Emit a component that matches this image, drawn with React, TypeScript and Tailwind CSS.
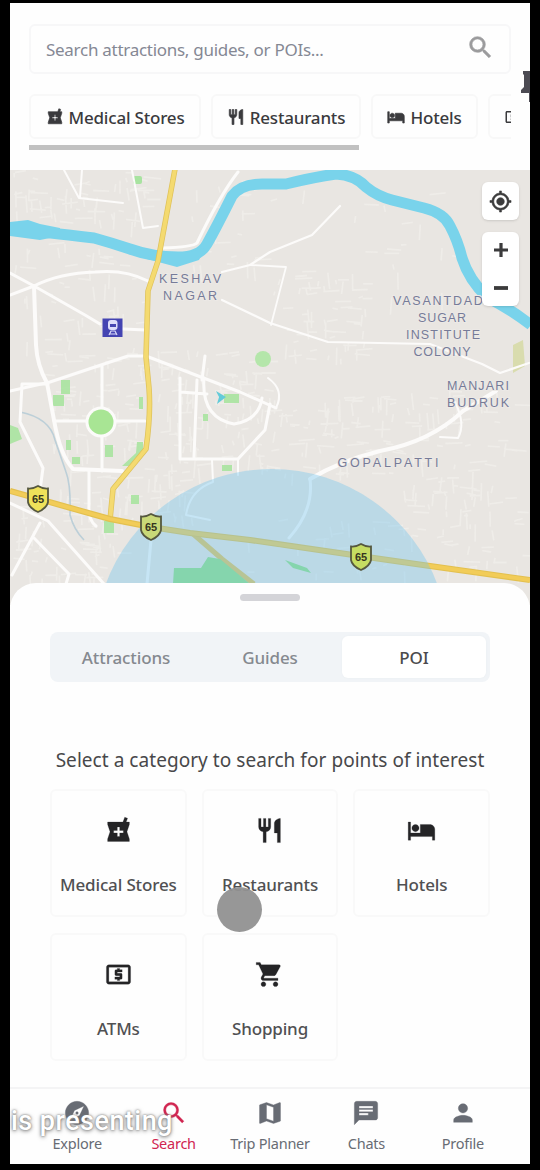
import React from 'react';
import {
  MdChat, MdExplore, MdHotel, MdLocalAtm, MdLocalPharmacy, MdMap, MdMyLocation,
  MdPerson, MdRestaurant, MdSearch, MdShoppingCart,
} from 'react-icons/md';

const chips = [
  { label: 'Medical Stores', icon: MdLocalPharmacy, box: 'w-[172px]' },
  { label: 'Restaurants', icon: MdRestaurant, box: 'w-[150px]' },
  { label: 'Hotels', icon: MdHotel, box: 'w-[107px]' },
];

const categories = [
  { label: 'Medical Stores', icon: MdLocalPharmacy },
  { label: 'Restaurants', icon: MdRestaurant },
  { label: 'Hotels', icon: MdHotel },
  { label: 'ATMs', icon: MdLocalAtm },
  { label: 'Shopping', icon: MdShoppingCart },
];

const navItems = [
  { label: 'Explore', icon: MdExplore, color: 'text-[#686c74]' },
  { label: 'Search', icon: MdSearch, color: 'text-[#d02550]' },
  { label: 'Trip Planner', icon: MdMap, color: 'text-[#686c74]' },
  { label: 'Chats', icon: MdChat, color: 'text-[#686c74]' },
  { label: 'Profile', icon: MdPerson, color: 'text-[#686c74]' },
];

// Areas of dense minor streets: x, y, width, height, number of streets
const districts = [
  [14, 172, 140, 50, 60], [14, 240, 130, 60, 30], [20, 300, 125, 75, 40],
  [50, 380, 95, 90, 60], [155, 350, 120, 120, 110], [275, 270, 90, 90, 60],
  [260, 395, 130, 80, 70], [385, 390, 130, 110, 70], [400, 490, 125, 80, 50],
  [12, 500, 100, 80, 45], [120, 470, 80, 50, 40], [190, 180, 90, 90, 25],
  [300, 190, 170, 110, 22], [220, 520, 200, 55, 30], [60, 470, 60, 90, 30],
];

function minorStreets() {
  let seed = 11;
  const rnd = () => {
    seed = (seed * 16807) % 2147483647;
    return seed / 2147483647;
  };
  let d = '';
  for (const [x, y, w, h, n] of districts) {
    for (let i = 0; i < n; i++) {
      const px = x + rnd() * w;
      const py = y + rnd() * h;
      const len = 4 + rnd() * 14;
      const tilt = (rnd() - 0.5) * 4;
      d += rnd() > 0.5
        ? `M${px.toFixed(1)} ${py.toFixed(1)}l${len.toFixed(1)} ${tilt.toFixed(1)}`
        : `M${px.toFixed(1)} ${py.toFixed(1)}l${tilt.toFixed(1)} ${len.toFixed(1)}`;
    }
  }
  return d;
}

const streets = minorStreets();

function Shield({ x, y, fill }: { x: number; y: number; fill: string }) {
  return (
    <g transform={`translate(${x} ${y})`}>
      <path d="M-10 -10.5Q-5 -10 0 -13Q5 -10 10 -10.5V3Q9 9 0 13Q-9 9 -10 3Z" fill={fill} stroke="#56583f" strokeWidth="1.8" />
      <text y="4" textAnchor="middle" fontSize="11" fontWeight="700" fill="#35351f">65</text>
    </g>
  );
}

function CityMap() {
  return (
    <svg viewBox="10 170 520 435" className="block h-full w-full font-['Liberation_Sans',sans-serif]">
      <rect x="10" y="169" width="520" height="437" fill="#e9e6e2" />
      <path d={streets} stroke="#f6f4f0" strokeWidth="1.8" fill="none" opacity=".5" />

      <g fill="#a8e3a0">
        <rect x="133" y="176" width="9" height="8" rx="2" />
        <circle cx="263" cy="359" r="8" fill="#b4e6aa" />
        <path d="M61 380h9v14h-9zM53 395h11v11h-11zM10 425l8 3 4 11-12 5zM66 440h5v10h-5zM105 445h8v12h-8zM72 457h8v7h-8zM137 442h6v10l-13 14h-8l14-13zM139 397h4v12h-4zM104 521h10v12h-10zM131 495h8v9h-8zM224 394h15v9h-15zM203 414h5v7h-5zM222 465h10v6h-10z" opacity=".9" />
      </g>
      <path d="M513 345l10-5 2 26-12 7z" fill="#d9dcae" />
      <path d="M216 391l10 6-9 7 2-7z" fill="#63cbd9" />
      <path d="M20 412Q50 418 55 440L66 472Q71 485 70 515Q74 530 84 540" stroke="#bccfd8" strokeWidth="1.6" fill="none" />

      <g fill="none" stroke="#fcfbfa" strokeWidth="3" strokeLinejoin="round" strokeLinecap="round">
        <path d="M10 273L34 286L85 315L100 324M123 329L146 330" />
        <path d="M10 295L34 286Q60 273 95 272Q125 269 148 281" />
        <path d="M34 286L36 345Q37 365 47 383L54 420Q60 455 73 469L122 471" strokeWidth="4" />
        <path d="M10 391L50 382L128 356L146 356L240 392L276 408" />
        <path d="M48 384L22 384L20 422L43 468L40 490" />
        <path d="M102 366V471M54 421H145M89 471V505Q88 520 96 526" />
        <path d="M64 170L79 198L123 203M82 170L80 197M132 170L143 228L158 226" strokeWidth="2" />
        <path d="M238 172Q220 195 197 243Q193 247 162 248" />
        <path d="M222 272L250 265L270 252L312 235L340 206M222 300L270 323L328 342L430 344L482 364L500 373L529 363" strokeWidth="2.2" />
        <path d="M250 265L286 267L271 325" strokeWidth="1.8" />
        <path d="M180 378V459H238L265 430L270 404M197 380L194 457M204 378Q201 418 234 424Q259 420 262 398M180 392L207 394M205 356L202 380" />
        <path d="M238 460L238 475M212 460L213 482Q190 490 186 515M186 515L210 520" strokeWidth="2" />
        <path d="M310 479Q340 461 380 451Q430 442 463 411L496 391" strokeWidth="4" />
        <path d="M329 469L310 479Q314 510 289 538" />
        <path d="M10 503L48 521L104 584M40 523L12 575M34 538L69 574L66 584M151 540L147 584" />
        <path d="M455 402Q466 424 458 438L440 437M268 378Q285 390 276 408" strokeWidth="2" />
      </g>
      <circle cx="101" cy="422" r="15.5" fill="#fcfbfa" />
      <circle cx="101" cy="422" r="12.5" fill="#a8e594" />

      <path d="M10 228Q40 232 94 238Q112 243 130 249Q152 257 178 257Q200 257 207 244Q216 228 232 196Q241 184 262 184L286 184Q314 177 336 174Q355 175 366 187Q377 196 392 200L424 208Q444 213 450 226Q458 241 462 258Q469 280 487 297Q510 309 531 325" fill="none" stroke="#79d3eb" strokeWidth="11" strokeLinejoin="round" />
      <path d="M10 222l18-2 12 4 20 4v8l-20 4-30-4zM150 251l35 2 20-5-6 12-22 7-30-8z" fill="#79d3eb" />

      <g fill="none" strokeLinejoin="round">
        <path d="M175 169L158 261L148 291L146 357L149 388Q151 414 146 449L113 489L110 520" stroke="#dfc25a" strokeWidth="5.5" />
        <path d="M175 169L158 261L148 291L146 357L149 388Q151 414 146 449L113 489L110 520" stroke="#f4da70" strokeWidth="4" />
        <path d="M192 533L222 559L254 584" stroke="#e5c35b" strokeWidth="5" />
        <path d="M10 491L110 519L151 527L190 533L250 540L360 556L430 566L530 580" stroke="#e3c04f" strokeWidth="6" />
        <path d="M10 491L110 519L151 527L190 533L250 540L360 556L430 566L530 580" stroke="#f2cc58" strokeWidth="3.8" />
      </g>
      <path d="M174 568H201L208 557L220 559L250 584H173ZM285 560l22 8 4 5-18-5z" fill="#8fdf82" />
      <Shield x={38} y={499} fill="#efe15a" />
      <path d="M105 586A177 177 0 0 1 438 586Z" fill="#76c5ed" opacity=".4" />
      <Shield x={151} y={527} fill="#c9d978" />
      <Shield x={361} y={557} fill="#c5dc62" />

      <rect x="102.500" y="318.500" width="20" height="18.500" fill="#4444b2" />
      <rect x="108" y="320" width="9.500" height="10" rx="3" fill="#dcdcfa" />
      <path d="M110 324h6v3h-6z" fill="#4444b2" />
      <path d="M109 335l2-4h4l2 4M110 334h7" stroke="#dcdcfa" strokeWidth="1.2" fill="none" />

      <g fill="#767b98" fontSize="12.500" textAnchor="middle" stroke="#ece9e6" strokeWidth="2" paintOrder="stroke">
        <text x="190" y="283" textLength="62">KESHAV</text>
        <text x="190" y="300" textLength="54">NAGAR</text>
        <text x="443" y="305" textLength="100">VASANTDADA</text>
        <text x="442" y="322" textLength="48">SUGAR</text>
        <text x="443" y="339" textLength="74">INSTITUTE</text>
        <text x="442" y="356" textLength="57">COLONY</text>
        <text x="478" y="390" textLength="62">MANJARI</text>
        <text x="478" y="407" textLength="62">BUDRUK</text>
        <text x="388" y="467" textLength="101">GOPALPATTI</text>
      </g>
    </svg>
  );
}

export default function App() {
  return (
    <div className="h-[1170px] w-[540px] overflow-hidden bg-black px-[10px] pt-[3px] font-['Noto_Sans','Open_Sans',sans-serif]">
      <main className="relative flex h-[1161px] flex-col overflow-hidden bg-[#fefefe] [&_path[d^='M0_0h24']]:hidden">
        <header className="flex h-[167px] shrink-0 flex-col px-[19px] pt-[21px]">
          <div className="flex h-[50px] shrink-0 items-center justify-between rounded-md border-2 border-[#f7f7f8] pl-[15px] pr-[14px]">
            <span className="mt-[2px] whitespace-nowrap text-[17px] tracking-[-0.28px] text-[#858894]">Search attractions, guides, or POIs...</span>
            <MdSearch className="-mt-1 size-[29px] text-[#9b9b9d] [stroke-width:0.5]" />
          </div>
          <div className="mt-5 flex gap-[10px] overflow-hidden">
            {chips.map(({ label, icon: Icon, box }) => (
              <div key={label} className={`${box} flex h-[45px] shrink-0 items-center justify-center gap-[5px] rounded-md border-2 border-[#f8f8f8] text-[#3a3a3d]`}>
                <Icon className="size-[18px] shrink-0 [stroke-width:0.9]" />
                <span className="mt-[2px] whitespace-nowrap text-[17px] font-medium tracking-[-0.2px]">{label}</span>
              </div>
            ))}
            <div className="flex h-[45px] w-28 shrink-0 items-center rounded-md border-2 border-[#f8f8f8] pl-[14px] text-[#3a3a3d]">
              <MdLocalAtm className="size-[18px]" />
            </div>
          </div>
          <div className="mt-[6px] h-[5px] w-[330px] shrink-0 bg-[#c1c1c1]" />
        </header>

        <svg viewBox="0 0 9 32" className="absolute right-0 top-[68px] h-8 w-[9px]">
          <path d="M2 0h7v31H8V22H0v-3l3-3V4L2 3z" fill="#4c4b53" />
        </svg>

        <section className="relative h-[435px] shrink-0">
          <CityMap />
          <div className="absolute right-[11px] top-[12px] flex flex-col gap-3 text-[#3b3b3c]">
            <div className="flex h-[38px] w-[37px] items-center justify-center rounded-md bg-white shadow">
              <MdMyLocation className="size-[23px] [stroke-width:0.6]" />
            </div>
            <div className="flex h-[74px] w-[37px] flex-col items-center justify-between rounded-md bg-white py-[10px] shadow">
              <svg viewBox="0 0 16 16" className="size-4"><path d="M8 1v14M1 8h14" stroke="currentColor" strokeWidth="3.200" /></svg>
              <svg viewBox="0 0 16 16" className="size-4"><path d="M1 8h14" stroke="currentColor" strokeWidth="3.800" /></svg>
            </div>
          </div>
        </section>

        <section className="relative -mt-[22px] flex min-h-0 flex-1 flex-col rounded-t-[26px] bg-[#fefefe] px-10">
          <div className="mx-auto mt-[11px] h-[7px] w-[60px] shrink-0 rounded bg-[#d4d4d8]" />
          <div className="mt-[31px] flex h-[50px] shrink-0 rounded-lg bg-[#f1f4f7] p-1 text-[17px] font-medium tracking-[-0.1px] text-[#85898f]">
            <div className="flex flex-1 items-center justify-center pt-[2px]">Attractions</div>
            <div className="flex flex-1 items-center justify-center pt-[2px]">Guides</div>
            <div className="flex flex-1 items-center justify-center rounded-md bg-white pt-[2px] text-[#4b4b4d] shadow-[0_0_2px_#e9edf0]">POI</div>
          </div>
          <p className="-mx-3 mt-[65px] whitespace-nowrap text-center text-[19px] leading-[27px] tracking-[0.05px] text-[#48484a]">Select a category to search for points of interest</p>
          <div className="mt-[15px] grid grid-cols-3 gap-x-[15px] gap-y-4">
            {categories.map(({ label, icon: Icon }) => (
              <div key={label} className="flex h-32 flex-col items-center rounded-md border-2 border-[#f9f9f9] pt-[25px] text-[#242426]">
                <Icon className="size-[29px] [stroke-width:0.2]" />
                <span className="mt-[28px] whitespace-nowrap text-[17px] font-medium leading-6 tracking-[-0.15px] text-[#505052]">{label}</span>
              </div>
            ))}
          </div>
          <div className="absolute left-[207px] top-[304px] size-[45px] rounded-full bg-[#919191]/95" />
        </section>

        <nav className="relative flex h-[77px] shrink-0 border-t-2 border-[#f4f4f5] px-[19px]">
          {navItems.map(({ label, icon: Icon, color }) => (
            <div key={label} className={`${color} flex flex-1 flex-col items-center pt-[10px]`}>
              <Icon className="size-7 [stroke-width:0.3]" />
              <span className="mt-[6px] whitespace-nowrap text-[14.500px] leading-5 tracking-[-0.25px]">{label}</span>
            </div>
          ))}
          <div className="absolute left-[1px] top-[16px] whitespace-nowrap font-[Roboto,sans-serif] text-[27px] font-medium leading-8 tracking-[0.45px] text-white [text-shadow:0_0_2px_#777,0_1px_4px_#777]">is presenting</div>
        </nav>
      </main>
    </div>
  );
}
